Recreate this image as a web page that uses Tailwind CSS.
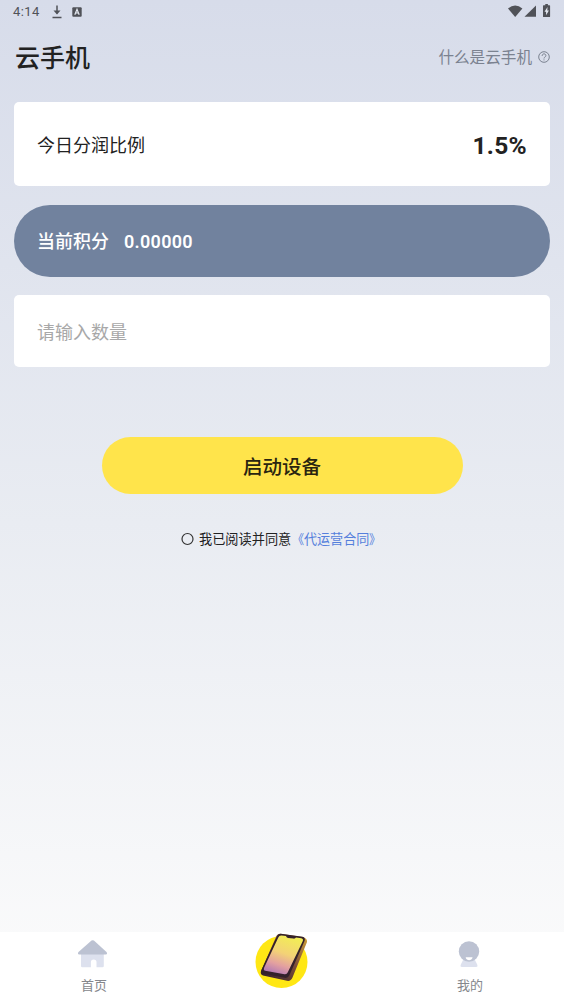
<!DOCTYPE html>
<html lang="zh-CN">
<head>
<meta charset="utf-8">
<title>云手机</title>
<script src="https://cdn.jsdelivr.net/npm/@tailwindcss/browser@4"></script>
</head>
<body class="font-['Roboto','Noto_Sans_CJK_SC',sans-serif]">
<div class="flex h-[1004px] w-[564px] flex-col overflow-hidden bg-linear-to-b from-[#d7dcea] via-[#e9ecf2] via-52% to-[#fcfcfc] text-[#222]">
  <header class="flex h-6 shrink-0 items-center justify-between pl-[13px] pr-3 text-[#505258]">
    <div class="flex items-center">
      <span class="w-[39px] text-[13px] leading-6 tracking-[0.4px]">4:14</span>
      <svg class="h-[14px] w-[10px]" viewBox="0 0 10 14" fill="none" stroke="currentColor"><path d="M5 .5v8M.5 12.500h9" stroke-width="1.500"/><path d="M1.500 5.500h7L5 9.600z" fill="currentColor" stroke="none"/></svg>
      <svg class="ml-[10px] h-[10px] w-[10px]" viewBox="0 0 10 10"><rect x=".3" y=".3" width="9.400" height="9.400" rx="1" fill="currentColor"/><path d="M2.800 7.800 5 2.300l2.200 5.500M3.600 6h2.800" fill="none" stroke="#e6eaf2" stroke-width="1.200"/></svg>
    </div>
    <svg class="h-4 w-[46px] translate-x-px" viewBox="0 0 46 16" fill="currentColor"><path d="M1 4.500Q8.200-1.500 15.400 4.500L8.200 13z"/><path d="M29 1.500v11.300H17.500z"/><path d="M38.300 0h2.600v1.200h1.600q.6 0 .6.600v10.700q0 .6-.6.600h-5.900q-.6 0-.6-.6V1.800q0-.6.6-.6h1.700z"/><path d="m40.500 3-3 4.700h1.600v3.600l2.800-4.900h-1.600z" fill="#e6eaf2"/></svg>
  </header>
  <main class="flex min-h-0 flex-1 flex-col px-[14px]">
    <div class="flex h-[66px] shrink-0 items-center justify-between pt-[3px]">
      <h1 class="pl-px text-[25px] font-medium leading-[66px]">云手机</h1>
      <div class="flex items-center gap-[6px] text-[#7b8290]">
        <span class="-translate-y-px text-[15.600px] leading-[66px]">什么是云手机</span>
        <svg class="h-3 w-3 -translate-y-[2px]" viewBox="0 0 12 12" fill="none" stroke="currentColor"><circle cx="6" cy="6" r="5.300"/><path d="M4.100 4.900C4.100 2.200 7.900 2.200 7.900 4.700 7.900 6 6 6 6 7.500M6 8.400v1"/></svg>
      </div>
    </div>
    <section class="mt-3 flex h-[84px] shrink-0 items-center justify-between rounded-[5px] bg-white px-[23px]">
      <span class="pt-[2px] text-[18px]">今日分润比例</span>
      <span class="pt-[5px] text-[24.500px] font-bold tracking-[0.3px]">1.5%</span>
    </section>
    <section class="mt-[19px] flex h-[72px] shrink-0 items-center rounded-full bg-[#71829e] px-[23px] text-[18px] font-medium text-white">
      <span>当前积分</span><span class="ml-[15px] pt-px font-semibold tracking-[0.3px]">0.00000</span>
    </section>
    <section class="mt-[18px] flex h-[72px] shrink-0 items-center rounded-[5px] bg-white px-[23px] pt-[2px] text-[18px] text-[#a8a8a8]">请输入数量</section>
    <button class="mt-[70px] h-[57px] w-[361px] shrink-0 self-center rounded-full bg-[#ffe44b] pt-1 text-[19.500px] font-medium text-[#2a2510]">启动设备</button>
    <div class="mt-[36px] flex h-5 items-center pl-[167px] text-[13.200px] leading-5">
      <svg class="mr-[5px] h-[13px] w-[13px] -translate-y-[1.500px]" viewBox="0 0 13 13" fill="none" stroke="#333"><circle cx="6.500" cy="6.500" r="5.500" stroke-width="1.200"/></svg>
      <span>我已阅读并同意</span><span class="-ml-[0.500px] flex text-[13.100px] text-[#557fdc]"><span class="origin-right scale-x-90">《</span><span>代运营合同</span><span class="origin-left scale-x-90">》</span></span>
    </div>
  </main>
  <nav class="grid h-[72px] shrink-0 grid-cols-3 bg-white text-[13px] text-[#85878c]">
    <div class="flex flex-col items-center">
      <svg class="mt-2 h-7 w-[30px] -translate-x-[1.500px]" viewBox="0 0 30 28"><path d="M3.500 12h22.800v14q0 1.300-1.300 1.300h-6v-5.100a2.800 2.800 0 0 0-5.600 0v5.100H4.800q-1.300 0-1.300-1.300z" fill="#dde1ee"/><path d="M14 .6q1.200-.8 2.400 0L29 12q1.400 2.400-.8 2.400H1.800Q-.4 14.400 1 12z" fill="#bcc2d2"/></svg>
      <span class="mt-2 leading-5">首页</span>
    </div>
    <div class="flex justify-center">
      <svg class="h-[58px] w-[56px]" viewBox="0 0 56 58">
        <defs><linearGradient id="screen" x1=".65" y1="0" x2=".3" y2="1"><stop stop-color="#f2ee55"/><stop offset=".45" stop-color="#f3d276"/><stop offset=".75" stop-color="#e3a0a0"/><stop offset="1" stop-color="#b279b5"/></linearGradient><linearGradient id="edge" x1="1" y1="0" x2="0" y2="1"><stop stop-color="#d4a536"/><stop offset=".45" stop-color="#805039"/><stop offset="1" stop-color="#2b1a2b"/></linearGradient></defs>
        <circle cx="27.500" cy="30" r="26" fill="#ffe714"/>
        <path d="M28 2 49 5q4.500 1.500 4 5L38.500 45.500q-1.700 4-5.500 3.300L9 43.500q-3-1-2-4.500L22 5q1.500-4 6-3" fill="url(#edge)"/>
        <path d="M27 1.800 48.500 4.800q3.300.7 2 4.200L35.300 43.500q-1.300 2.800-4.700 2.300L9.500 41.800q-3.200-.7-1.800-4.200L22.700 4.800q1.300-3.300 4.300-3" fill="#34212b"/>
        <path d="m27.500 3.500 4.500.6q.3 1.500 2 1.800l5.500.7q1.700.2 2.500-1.100l5.300.8q2.400.5 1.400 3L33.800 40.300q-1 2.400-3.300 2L11.300 38.700q-2.200-.5-1.200-3L24.300 5.500q.9-2.200 3.200-2" fill="url(#screen)"/>
      </svg>
    </div>
    <div class="flex flex-col items-center">
      <svg class="mt-[9px] h-[26px] w-[22px] -translate-x-px" viewBox="0 0 22 26"><path d="M5.500 18h11l2.900 6q.7 2-1.200 2H3.800q-1.900 0-1.200-2z" fill="#dde1ee"/><circle cx="11" cy="10.500" r="10.200" fill="#bcc2d2"/><path d="M8 16.200h6.200q.4 0 .3.600c-.8 3.100-6 3.100-6.800 0q-.1-.6.300-.6" fill="#fff"/></svg>
      <span class="mt-[9px] leading-5">我的</span>
    </div>
  </nav>
</div>
</body>
</html>
